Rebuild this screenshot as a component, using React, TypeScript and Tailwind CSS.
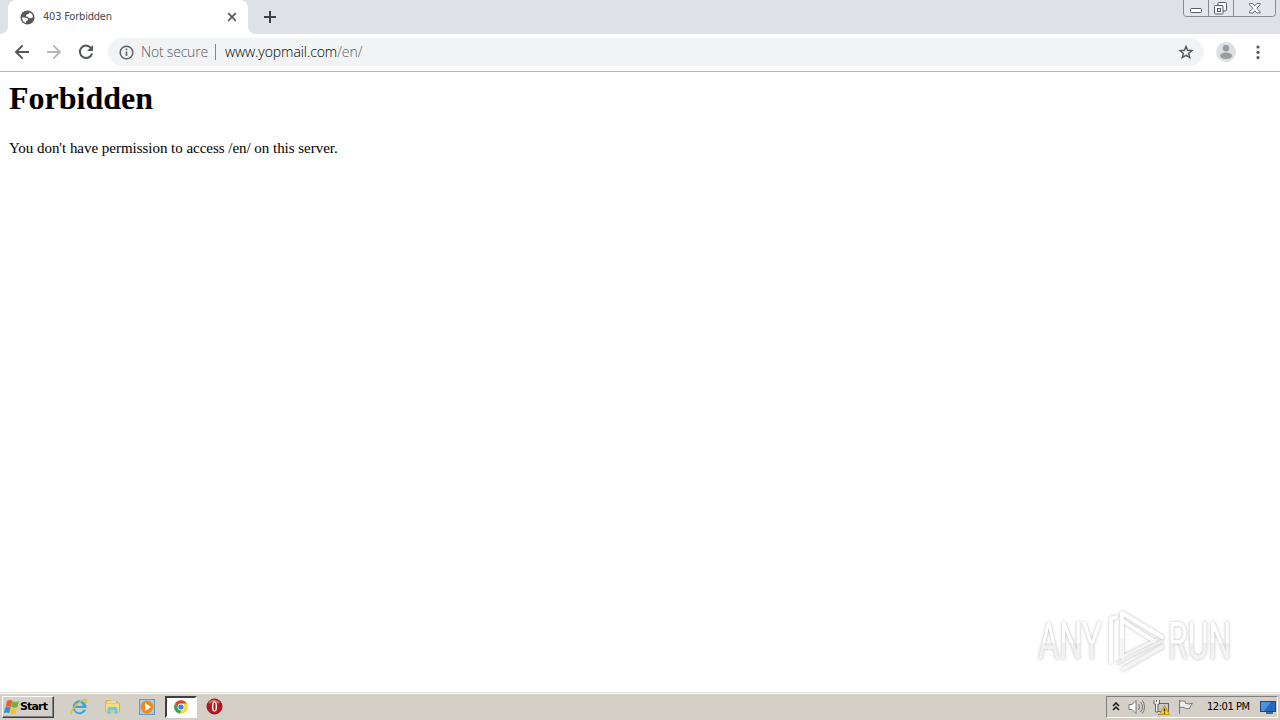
import React from "react";

const ui = "font-['DejaVu_Sans',sans-serif] font-stretch-condensed";

function Tab() {
  return (
    <div className="relative flex h-[34px] w-[240px] items-center rounded-t-lg bg-white pl-[13px] pr-[11px]">
      <svg className="absolute -left-2 bottom-0" width="8" height="8"><path d="M8 0v8H0a8 8 0 0 0 8-8" fill="#fff" /></svg>
      <svg className="absolute -right-2 bottom-0" width="8" height="8"><path d="M0 0v8h8a8 8 0 0 1-8-8" fill="#fff" /></svg>
      <svg className="-ml-px" width="15" height="15" viewBox="0 0 16 16">
        <circle cx="8" cy="8" r="7.5" fill="#54585d" />
        <path d="M2.2 7.6 6 8.2q2.8 0 2.7 1.7Q8.6 11.8 6.6 11.8l-.4 2.1Q2.2 12.6 2.2 7.6M10.2 2.7Q13.7 4 13.8 7.6l-2.2 1.2-2.5-.4-.6-1.3-2.3-.3q.1-2 2-2.2l.9-.5z" fill="#fff" />
      </svg>
      <span className={`ml-2 whitespace-nowrap text-[11px] leading-[14px] tracking-[-0.2px] text-[#45484c] ${ui}`}>403 Forbidden</span>
      <svg className="ml-auto" width="10" height="10" viewBox="0 0 10 10"><path d="m1.2 1.2 7.6 7.6m0-7.6L1.2 8.8" stroke="#54575b" strokeWidth="1.7" /></svg>
    </div>
  );
}

function WindowButtons() {
  return (
    <svg className="ml-auto mr-[3px]" width="94" height="18" viewBox="0 0 94 18" fill="none">
      <path d="M.5 0v13.5q0 3 3 3h86q3 0 3-3V0" fill="#e3e6eb" stroke="#868b93" />
      <path d="M25.5 0v16M50.5 0v16" stroke="#868b93" />
      <rect x="7.5" y="8.5" width="11" height="4" rx="1.2" fill="#fff" stroke="#555962" />
      <rect x="35" y="2.5" width="8.5" height="8.5" rx="1" fill="#fff" stroke="#555962" />
      <rect x="31.5" y="5.5" width="8.5" height="8.5" rx="1" fill="#fff" stroke="#555962" />
      <rect x="34.5" y="8.5" width="3" height="3" stroke="#555962" />
      <path d="M66.5 3.5h3.3l2 2.3 2-2.3h3.3v1.3L73.7 8.3l3.4 3.4V13h-3.3l-2-2.3-2 2.3h-3.3v-1.3l3.4-3.4-3.4-3.5z" fill="#fff" stroke="#666a73" />
    </svg>
  );
}

function Toolbar() {
  return (
    <div className="flex h-[38px] items-center border-b border-[#b5b5b5] bg-white pb-px pl-[14px] pr-[14px]">
      <svg width="16" height="16" viewBox="0 0 16 16"><path d="M15 8H2m6.7-6.6L2 8l6.7 6.6" fill="none" stroke="#54575b" strokeWidth="2" /></svg>
      <svg className="ml-4" width="16" height="16" viewBox="0 0 16 16"><path d="M1 8h13M7.3 1.4 14 8l-6.7 6.6" fill="none" stroke="#b5b7b9" strokeWidth="1.8" /></svg>
      <svg className="ml-4" width="16" height="16" viewBox="0 0 16 16"><path d="M13.4 4.6A6.2 6.2 0 1 0 14.1 9.4" fill="none" stroke="#54575b" strokeWidth="2" /><path d="M15 1v6H9z" fill="#54575b" /></svg>
      <div className="ml-[14px] flex h-7 w-[1096px] items-center rounded-full bg-[#f1f3f4] pl-[11px] pr-[10px] font-['Open_Sans',sans-serif] text-[14px] font-light leading-5">
        <svg width="15" height="15" viewBox="0 0 15 15"><circle cx="7.5" cy="7.5" r="6.3" fill="none" stroke="#5f6368" strokeWidth="1.5" /><path d="M7.5 3.5v1.7M7.5 6.5V11" stroke="#5f6368" strokeWidth="1.6" /></svg>
        <span className="ml-[7px] w-[67px] whitespace-nowrap tracking-[-0.2px] text-[#55595e]">Not secure</span>
        <span className="ml-[7px] h-4 w-px bg-[#85888c]" />
        <span className="ml-[9px] whitespace-nowrap tracking-[-0.08px] text-black">www.yopmail.com<span className="text-[#606468]">/en/</span></span>
        <svg className="ml-auto" width="16" height="16" viewBox="0 0 16 16"><path d="m8 2.3 1.6 4 4.3.3-3.3 2.8 1.1 4.2L8 11.3l-3.7 2.3 1.1-4.2-3.3-2.8 4.3-.3z" fill="none" stroke="#54575b" strokeWidth="1.4" /></svg>
      </div>
      <svg className="ml-3" width="20" height="20" viewBox="0 0 20 20"><circle cx="10" cy="10" r="10" fill="#dedfe0" /><circle cx="10" cy="6.2" r="3.2" fill="#9a9c9e" /><ellipse cx="10" cy="13.7" rx="6" ry="3.2" fill="#9a9c9e" /></svg>
      <svg className="ml-auto" width="16" height="16" viewBox="0 0 16 16" fill="#54575b"><circle cx="8" cy="3" r="1.6" /><circle cx="8" cy="8.3" r="1.6" /><circle cx="8" cy="13.6" r="1.6" /></svg>
    </div>
  );
}

function Watermark() {
  return (
    <svg className="absolute bottom-[15px] right-[35px] overflow-visible drop-shadow-[0_0_1.5px_rgba(0,0,0,0.28)]" width="215" height="72" viewBox="0 0 215 72">
      <defs><linearGradient id="fade" x1="0" y1="0" x2="0" y2="1"><stop offset="0.53" stopColor="#fff" /><stop offset="0.54" stopColor="#f0f0f0" /><stop offset="1" stopColor="#f7f7f7" /></linearGradient></defs>
      <g fill="url(#fade)" fontFamily="Roboto, sans-serif" fontSize="51" fontWeight="400">
        <text transform="translate(8 54) scale(.64 1)">ANY</text>
        <text transform="translate(138 54) scale(.63 1)">RUN</text>
      </g>
      <g fill="none" strokeWidth="3.8" strokeLinejoin="round" strokeLinecap="round">
        <path d="M81 57V14l5-2" stroke="#fff" />
        <path d="m88 58 10-6 34-16" stroke="#eeeeee" strokeWidth="3" />
        <path d="M93 64 132 42" stroke="#f4f4f4" />
        <path d="M92 52V8l40 24M93 16l31 20" stroke="#fff" />
        <path d="M92 35v17l34-17" stroke="#f4f4f4" strokeWidth="3" />
      </g>
    </svg>
  );
}

function StartFlag() {
  return (
    <svg width="17" height="17" viewBox="0 0 17 17">
      <path d="M4 2q3-2 5.6 0L8 8q-2.6-1.5-5.3 0z" fill="#e7602e" />
      <path d="M9.8 2.3q3 1.5 6.2-.3L14.5 8q-3 1.3-6.2 0z" fill="#68b344" />
      <path d="M2.3 8.5q2.8-1.7 5.4 0L6 14.2q-2.4-1.6-5.4.1z" fill="#388ed0" />
      <path d="M8.1 8.8q3 1.6 6.1.2l-1.6 5.7q-3 1.4-6.1-.3z" fill="#f5c237" />
    </svg>
  );
}

function Taskbar() {
  return (
    <footer className="flex h-7 items-center border-t border-[#dedbd4] bg-[#d4d0c8] pl-[2px] pr-[2px] shadow-[inset_0_1px_0_#fff]">
      <div className="mt-px flex h-[22px] w-[52px] items-center border border-b-[#404040] border-l-white border-r-[#404040] border-t-white shadow-[inset_-1px_-1px_0_#808080]">
        <StartFlag />
        <span className="whitespace-nowrap font-['DejaVu_Sans',sans-serif] text-[11px] font-bold leading-4 tracking-[-0.85px] text-black">Start</span>
      </div>
      <svg className="ml-4" width="18" height="18" viewBox="0 0 18 18" fill="none">
        <path d="M14.5 10H4.8a4.6 4.6 0 0 0 8.7 1.7h2.7a7 7 0 1 1 .1-4.5q.3 1.2.1 2.8z" fill="#35a8df" /><path d="M5 7.8q.8-3 4-3t3.9 3z" fill="#d4d0c8" />
        <path d="M2.2 15.5C-2 18 4 6.7 12.7 2.4c4.8-2.4 4.2.8 2.8 3" stroke="#e5bd35" strokeWidth="1.5" />
      </svg>
      <svg className="ml-4" width="17" height="17" viewBox="0 0 17 17">
        <path d="M1.5 3V2h5l1 1h6v3H1.5z" fill="#d3b43f" /><path d="M3 3.5h9v3H3z" fill="#fff" /><path d="M1.5 5h14v9h-14z" fill="#f4df80" stroke="#d2b75a" /><path d="M3.5 16v-5q0-2 2-2h6q2 0 2 2v5h-3v-3.5h-4V16z" fill="#73c5e8" />
      </svg>
      <svg className="ml-[18px]" width="16" height="16" viewBox="0 0 16 16"><rect x=".5" y=".5" width="15" height="15" fill="#aacce6" stroke="#5d9bcb" /><circle cx="8" cy="8" r="6.4" fill="#f28b16" /><path d="m6 4 6 4-6 4z" fill="#fff" /></svg>
      <div className="ml-[10px] flex h-[22px] w-8 items-center justify-center border-2 border-b-white border-l-[#404040] border-r-white border-t-[#404040] bg-white">
        <svg width="14" height="14" viewBox="0 0 14 14"><circle cx="7" cy="7" r="6.8" fill="#ffd13b" /><path d="M1.1 3.6A6.8 6.8 0 0 1 12.9 3.6H7L4 8.6z" fill="#e34331" /><path d="m1.1 3.6 3 5.2 3.2 1.5L5.7 13.7A6.8 6.8 0 0 1 1.1 3.6" fill="#2ca357" /><circle cx="7" cy="7" r="3.4" fill="#fff" /><circle cx="7" cy="7" r="2.6" fill="#3f7fe2" /></svg>
      </div>
      <svg className="ml-[9px]" width="17" height="17" viewBox="0 0 17 17"><circle cx="8.5" cy="8.5" r="7.5" fill="#bc1720" stroke="#811319" /><path d="M3 5q5-5 10 0" fill="none" stroke="#db6b68" strokeWidth="2" /><ellipse cx="8.5" cy="8.5" rx="2.6" ry="5.2" fill="#eee" /><ellipse cx="8.5" cy="8.5" rx="1" ry="4" fill="#a50e17" /></svg>
      <div className="ml-auto mt-px flex h-[22px] w-[172px] items-center border border-b-white border-l-[#808080] border-r-white border-t-[#808080] pl-[5px]">
        <svg className="-mt-[2px]" width="8" height="9" viewBox="0 0 8 9"><path d="m1 4 3-3 3 3M1 8l3-3 3 3" fill="none" stroke="#111" strokeWidth="1.5" /></svg>
        <svg className="ml-2" width="18" height="16" viewBox="0 0 18 16" fill="none" stroke="#77777a"><path d="M1 5.5h3l4-4v13l-4-4H1z" fill="#fff" /><path d="M10.5 5q2 3 0 6M12.5 3q4 5 0 10M14.5 1.5q4 6.5 0 13" /></svg>
        <svg className="ml-[7px]" width="17" height="17" viewBox="0 0 17 17" fill="none"><rect x="4.5" y="4.5" width="11" height="8" fill="#c9c9c9" stroke="#646466" /><path d="M5 15.5h7" stroke="#656567" /><path d="M1 1v4h1.5v8H5V5h1.5V1M3.5 1v2" fill="#eee" stroke="#656567" /><path d="m11.5 6.5 5 9h-10z" fill="#f6cf23" stroke="#c39a12" /><path d="M11.5 9.5v3m0 1v1.2" stroke="#222" strokeWidth="1.3" /></svg>
        <svg className="ml-[7px]" width="18" height="16" viewBox="0 0 18 16"><path d="M2.5 1v14M2.5 2.5q3-1.5 6 .2v1.6q3 1.2 7 .1-2.2 2.5-3 5.2-3 .5-4.8-.7-2-1.2-5.2-.5z" fill="#eee" stroke="#77777a" /></svg>
        <span className={`ml-3 w-[46px] whitespace-nowrap text-[11px] leading-[14px] tracking-[-0.45px] text-black ${ui}`}>12:01 PM</span>
        <svg className="ml-[7px]" width="16" height="15" viewBox="0 0 16 15"><rect x=".5" y="1.5" width="15" height="10" fill="#2869b7" stroke="#174683" /><path d="M1 2h10L4 11H1z" fill="#4c95db" /><path d="M6 13h7" stroke="#356ba3" strokeWidth="2" /></svg>
      </div>
    </footer>
  );
}

export default function App() {
  return (
    <div className="relative flex h-[720px] w-[1280px] flex-col overflow-hidden bg-white">
      <header>
        <div className="flex h-[34px] items-start bg-[#dee1e8] pl-2">
          <Tab />
          <svg className="ml-4 mt-[11px]" width="12" height="12" viewBox="0 0 12 12"><path d="M6 0v12M0 6h12" stroke="#3d4148" strokeWidth="2" /></svg>
          <WindowButtons />
        </div>
        <Toolbar />
      </header>
      <main className="relative min-h-0 flex-1 px-[9px] pt-2 font-['Liberation_Serif',serif] text-black">
        <h1 className="text-[32px] font-bold leading-9">Forbidden</h1>
        <p className="mt-[22px] text-[15px] leading-5 tracking-[-0.03px]">You don't have permission to access /en/ on this server.</p>
        <Watermark />
      </main>
      <Taskbar />
    </div>
  );
}
